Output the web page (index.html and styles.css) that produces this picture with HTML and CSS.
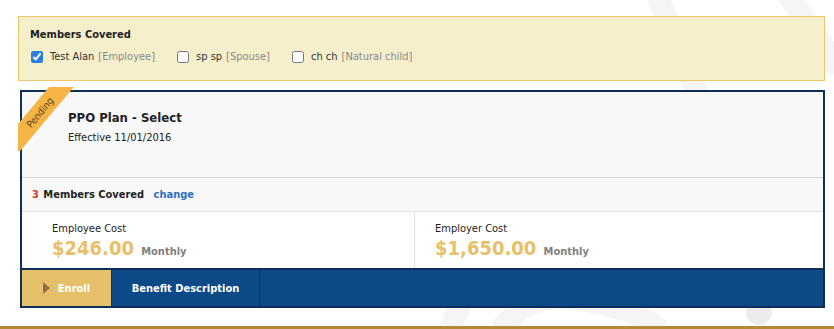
FILE: index.html
```html
<!DOCTYPE html>
<html lang="en">
<head>
    <meta charset="UTF-8">
    <meta name="viewport" content="width=device-width, initial-scale=1.0">
    <title>Plan Selection</title>
    <link rel="stylesheet" href="styles.css">
</head>
<body>
    <svg class="watermark" width="834" height="329" viewBox="0 0 834 329">
        <path d="M655 -10 Q675 40 700 100" />
        <path d="M785 -10 Q805 20 840 70" />
        <path d="M450 330 Q470 270 520 250" />
        <path d="M500 330 Q530 290 580 300 Q640 310 660 330" />
        <circle cx="759" cy="312" r="13" />
    </svg>

    <div class="page">
        <div class="members-box">
            <div class="members-title">Members Covered</div>
            <div class="members-list">
                <label class="member"><input type="checkbox" checked> Test Alan <span class="relation">[Employee]</span></label>
                <label class="member"><input type="checkbox"> sp sp <span class="relation">[Spouse]</span></label>
                <label class="member"><input type="checkbox"> ch ch <span class="relation">[Natural child]</span></label>
            </div>
        </div>

        <div class="plan-card">
            <div class="ribbon-wrap"><div class="ribbon">Pending</div></div>
            <div class="plan-head">
                <div class="plan-name">PPO Plan - Select</div>
                <div class="plan-date">Effective 11/01/2016</div>
            </div>
            <div class="plan-members">
                <span class="count">3</span> Members Covered <a href="#" class="change">change</a>
            </div>
            <div class="plan-costs">
                <div class="cost first">
                    <div class="cost-label">Employee Cost</div>
                    <div class="cost-value">$246.00 <span class="period">Monthly</span></div>
                </div>
                <div class="cost">
                    <div class="cost-label">Employer Cost</div>
                    <div class="cost-value">$1,650.00 <span class="period">Monthly</span></div>
                </div>
            </div>
            <div class="plan-actions">
                <button class="btn enroll"><span class="arrow"></span>Enroll</button>
                <button class="btn desc">Benefit Description</button>
            </div>
        </div>
    </div>

    <div class="footer-line"></div>
</body>
</html>
```

FILE: styles.css
```css
body {
    margin: 0;
    background: #ffffff;
    font-family: "DejaVu Sans Condensed", "DejaVu Sans", sans-serif;
    font-size: 11px;
    color: #222;
    position: relative;
    height: 329px;
    overflow: hidden;
}

.watermark {
    position: absolute;
    left: 0;
    top: 0;
    z-index: 0;
}

.watermark path {
    fill: none;
    stroke: #f5f5f5;
    stroke-width: 22;
}

.watermark circle {
    fill: #ececec;
}

.page {
    position: relative;
    z-index: 1;
    padding: 16px 9px 0 18px;
}

/* Members box */
.members-box {
    background: #f5efcc;
    border: 1px solid #ecc76a;
    padding: 11px 11px 17px;
}

.members-title {
    font-weight: bold;
    font-size: 11px;
    color: #222;
    margin-bottom: 9px;
}

.members-list {
    display: flex;
    gap: 21px;
}

.member {
    display: flex;
    align-items: center;
    color: #333;
}

.member input {
    margin: 0 7px 0 1px;
    width: 12px;
    height: 12px;
    accent-color: #2b7de1;
}

.relation {
    color: #8a8a8a;
    margin-left: 4px;
}

/* Plan card */
.plan-card {
    position: relative;
    margin-top: 9px;
    margin-left: 2px;
    border: 2px solid #0d2f55;
    background: #f8f8f8;
}

.ribbon-wrap {
    position: absolute;
    left: -4px;
    top: -5px;
    width: 58px;
    height: 64px;
    overflow: hidden;
}

.ribbon {
    position: absolute;
    left: -23px;
    top: 16px;
    width: 90px;
    height: 19px;
    line-height: 19px;
    background: #f5b445;
    color: #5e4318;
    font-size: 10px;
    text-align: center;
    transform: rotate(-50deg);
}

.plan-head {
    height: 86px;
    padding: 18px 0 0 46px;
    box-sizing: border-box;
    border-bottom: 1px solid #d4d4d4;
}

.plan-name {
    font-weight: bold;
    font-size: 13px;
    color: #222;
    margin-bottom: 6px;
}

.plan-date {
    font-size: 11px;
    color: #222;
}

.plan-members {
    height: 33px;
    line-height: 33px;
    padding-left: 10px;
    font-weight: bold;
    border-bottom: 1px solid #e2e2e2;
    color: #222;
}

.count {
    color: #e0332e;
    margin-right: 1px;
}

.change {
    color: #2e6fc0;
    text-decoration: none;
    margin-left: 6px;
}

.plan-costs {
    display: flex;
    background: #ffffff;
    height: 56px;
}

.cost {
    flex: 1;
    padding: 10px 0 0 20px;
}

.cost.first {
    flex: none;
    width: 362px;
    padding-left: 30px;
    border-right: 1px solid #e2e2e2;
}

.cost-label {
    color: #222;
    margin-bottom: 1px;
}

.cost-value {
    font-weight: bold;
    font-size: 20px;
    color: #e8c06a;
}

.period {
    font-size: 11px;
    color: #808080;
    margin-left: 1px;
}

.plan-actions {
    display: flex;
    height: 36px;
    background: #0b4a86;
    border-top: 2px solid #0d2f55;
}

.btn {
    border: none;
    border-right: 1px solid #0a3563;
    font-family: "DejaVu Sans Condensed", "DejaVu Sans", sans-serif;
    font-size: 11px;
    font-weight: bold;
    color: #ffffff;
    cursor: pointer;
    display: flex;
    align-items: center;
    justify-content: center;
}

.enroll {
    width: 90px;
    padding-left: 6px;
    background: #e6c068;
}

.arrow {
    width: 0;
    height: 0;
    border-top: 6px solid transparent;
    border-bottom: 6px solid transparent;
    border-left: 7px solid #8b7443;
    margin-right: 8px;
}

.desc {
    width: 148px;
    background: #0b4a86;
}

.footer-line {
    position: absolute;
    left: 0;
    right: 0;
    bottom: 0;
    height: 3px;
    background: #b38a33;
}
```
